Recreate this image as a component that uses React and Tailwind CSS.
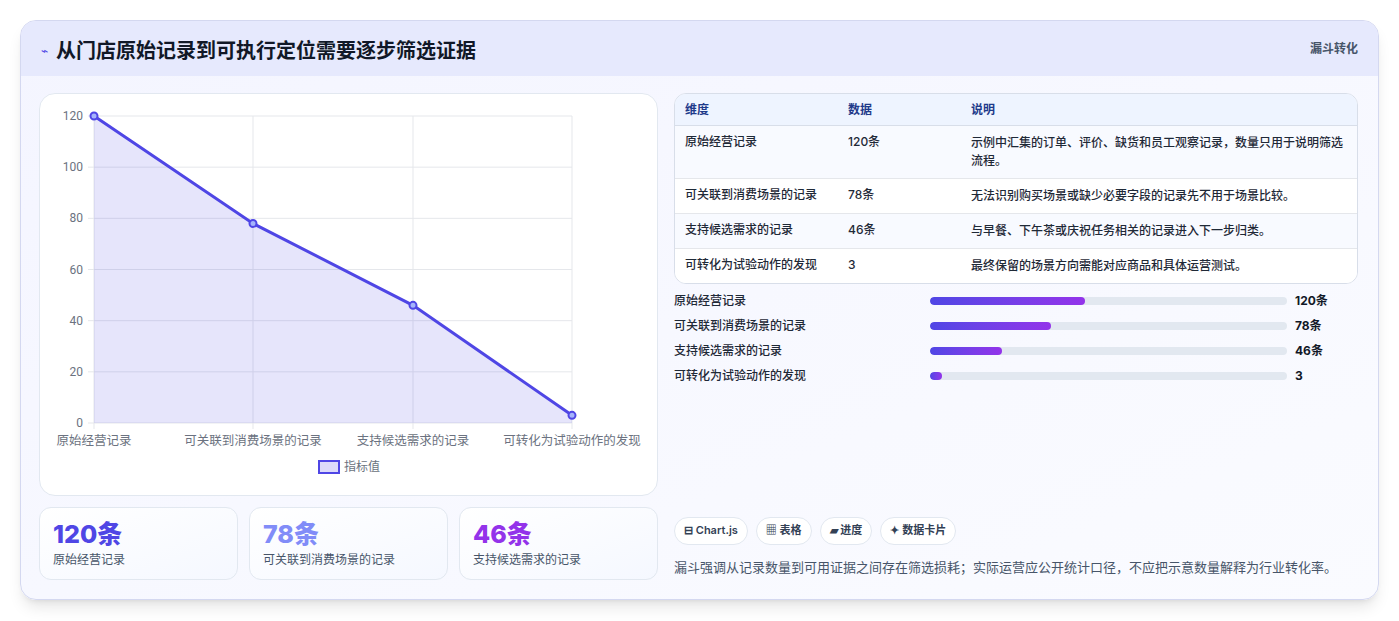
import React from "react";

const rows = [
  ["原始经营记录", "120条", "示例中汇集的订单、评价、缺货和员工观察记录，数量只用于说明筛选流程。"],
  ["可关联到消费场景的记录", "78条", "无法识别购买场景或缺少必要字段的记录先不用于场景比较。"],
  ["支持候选需求的记录", "46条", "与早餐、下午茶或庆祝任务相关的记录进入下一步归类。"],
  ["可转化为试验动作的发现", "3", "最终保留的场景方向需能对应商品和具体运营测试。"],
];
const bars = [
  ["原始经营记录", 43.4, "120条"],
  ["可关联到消费场景的记录", 34, "78条"],
  ["支持候选需求的记录", 20.2, "46条"],
  ["可转化为试验动作的发现", 3.4, "3"],
];

function Chart() {
  const xs = [54, 213, 373, 532];
  const vals = [120, 78, 46, 3];
  const y = (v) => 329 - (v / 120) * 307;
  const pts = xs.map((x, i) => `${x},${y(vals[i])}`).join(" ");
  return (
    <svg width="619" height="403" className="block" style={{ fontFamily: "Roboto, 'Noto Sans CJK SC', sans-serif" }}>
      {[0, 20, 40, 60, 80, 100, 120].map((v) => (
        <g key={v}>
          <line x1="48" x2="532" y1={y(v)} y2={y(v)} stroke="#e5e7eb" />
          <text x="43" y={y(v) + 4} textAnchor="end" fontSize="12" fill="#6b7280">{v}</text>
        </g>
      ))}
      {xs.map((x) => (
        <line key={x} x1={x} x2={x} y1="22" y2="335" stroke="#e5e7eb" />
      ))}
      <polygon points={`54,329 ${pts} 532,329`} fill="rgba(79,70,229,0.14)" />
      <polyline points={pts} fill="none" stroke="#4f46e5" strokeWidth="3" />
      {xs.map((x, i) => (
        <circle key={x} cx={x} cy={y(vals[i])} r="3.5" fill="#a5b4fc" stroke="#4f46e5" strokeWidth="2" />
      ))}
      {["原始经营记录", "可关联到消费场景的记录", "支持候选需求的记录", "可转化为试验动作的发现"].map((t, i) => (
        <text key={t} x={xs[i]} y="351" textAnchor="middle" fontSize="12.5" fill="#6b7280">{t}</text>
      ))}
      <rect x="279" y="367" width="20" height="12" fill="rgba(79,70,229,0.2)" stroke="#4f46e5" strokeWidth="2" />
      <text x="304" y="377" fontSize="12" fill="#6b7280">指标值</text>
    </svg>
  );
}

export default function App() {
  return (
    <div className="w-[1399px] h-[621px] bg-white p-5 pb-0" style={{ fontFamily: "Inter, 'Noto Sans CJK SC', sans-serif" }}>
      <div className="h-[580px] rounded-2xl border border-[#d4d8f0] bg-gradient-to-br from-[#f4f5ff] to-[#fafbff] shadow-lg overflow-hidden">
        <div className="h-[55px] bg-[#e6e9fd] flex items-center justify-between px-5 pt-1">
          <div className="flex items-center gap-2">
            <span className="text-[#4f46e5] text-xs">⌁</span>
            <h1 className="text-[20px] font-bold text-[#111827]">从门店原始记录到可执行定位需要逐步筛选证据</h1>
          </div>
          <span className="text-xs font-semibold text-[#475569] self-start mt-4">漏斗转化</span>
        </div>
        <div className="flex gap-4 pl-[18px] pr-5 pt-[17px]">
          <div className="w-[619px] flex flex-col gap-[11px]">
            <div className="h-[403px] rounded-2xl border border-[#e2e8f0] bg-white">
              <Chart />
            </div>
            <div className="flex gap-[11px]">
              {[["120条", "text-[#4f46e5]", "原始经营记录"], ["78条", "text-[#818cf8]", "可关联到消费场景的记录"], ["46条", "text-[#9333ea]", "支持候选需求的记录"]].map(([n, c, l]) => (
                <div key={l} className="flex-1 h-[73px] rounded-xl border border-[#e2e8f0] bg-gradient-to-br from-white to-[#f5f8ff] px-[13px] pt-[10px]">
                  <div className={`text-[25px] font-extrabold leading-8 ${c}`}>{n}</div>
                  <div className="text-xs text-[#475569] mt-0.5">{l}</div>
                </div>
              ))}
            </div>
          </div>
          <div className="flex-1 flex flex-col">
            <div className="rounded-xl border border-[#d8dee9] bg-white overflow-hidden text-xs">
              <div className="flex bg-[#eef4ff] h-[32px] items-center font-semibold text-[#1e3a8a] border-b border-[#d8dee9]">
                <div className="w-[173px] pl-[10px]">维度</div>
                <div className="w-[123px]">数据</div>
                <div className="flex-1">说明</div>
              </div>
              {rows.map(([a, b, c], i) => (
                <div key={a} className={`flex py-[8px] text-[#1f2937] font-medium ${i % 2 === 0 ? "bg-[#f8faff]" : "bg-white"} ${i < 3 ? "border-b border-[#e5e7eb]" : ""}`}>
                  <div className="w-[173px] pl-[10px]">{a}</div>
                  <div className="w-[123px]">{b}</div>
                  <div className="flex-1 pr-3 leading-[18px]">{c}</div>
                </div>
              ))}
            </div>
            <div className="mt-[9px] flex flex-col gap-[9px]">
              {bars.map(([l, w, v]) => (
                <div key={l} className="flex items-center h-4 text-xs">
                  <div className="w-[256px] text-[#1f2937] font-medium">{l}</div>
                  <div className="w-[357px] h-2 rounded-full bg-[#e2e8f0] overflow-hidden">
                    <div className="h-full rounded-full bg-gradient-to-r from-[#4f46e5] to-[#9333ea]" style={{ width: `${w}%` }} />
                  </div>
                  <div className="ml-2 font-bold text-[#111827]">{v}</div>
                </div>
              ))}
            </div>
            <div className="mt-auto flex gap-2 text-[11px] font-semibold text-[#334155]">
              {["⊟ Chart.js", "▦ 表格", "▰ 进度", "✦ 数据卡片"].map((t) => (
                <span key={t} className="h-7 px-[9px] rounded-full border border-[#e2e8f0] bg-white flex items-center">{t}</span>
              ))}
            </div>
            <p className="mt-[13px] mb-[3px] text-[13px] text-[#475569]">漏斗强调从记录数量到可用证据之间存在筛选损耗；实际运营应公开统计口径，不应把示意数量解释为行业转化率。</p>
          </div>
        </div>
      </div>
    </div>
  );
}
